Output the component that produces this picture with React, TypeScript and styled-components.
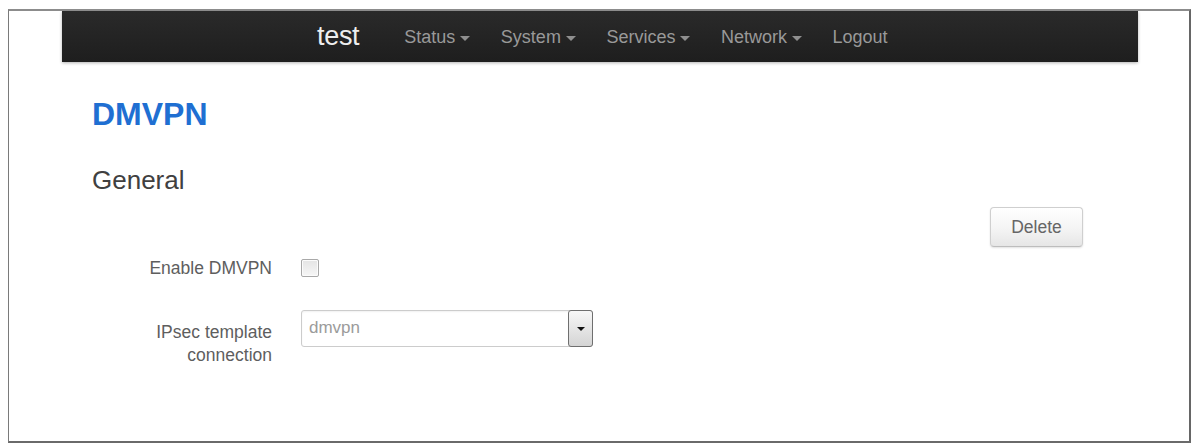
import React from "react";
import styled, { createGlobalStyle } from "styled-components";

const GlobalStyle = createGlobalStyle`
  html, body {
    margin: 0;
    padding: 0;
    background: #ffffff;
  }
  body {
    font-family: "Liberation Sans", Arial, Helvetica, sans-serif;
    overflow: hidden;
  }
  * { box-sizing: border-box; }
`;

const Frame = styled.div`
  width: 1183px;
  height: 434px;
  margin: 9px 0 0 8px;
  border-top: 2px solid #8c8c8c;
  border-left: 1px solid #7a7a7a;
  border-right: 2px solid #666666;
  border-bottom: 2px solid #6a6a6a;
  background: #ffffff;
  overflow: hidden;
`;

const Navbar = styled.nav`
  margin-left: 53px;
  width: 1076px;
  height: 51px;
  display: flex;
  align-items: center;
  padding-left: 255px;
  background: linear-gradient(to bottom, #2a2a2a 0%, #1e1e1e 100%);
  box-shadow: 0 1px 3px rgba(0, 0, 0, 0.3);
`;

const Brand = styled.span`
  font-size: 27px;
  color: #eeeeee;
  margin-right: 45px;
  letter-spacing: -0.3px;
`;

const NavList = styled.div`
  display: flex;
  align-items: center;
  gap: 30.5px;
`;

const NavItem = styled.span`
  display: flex;
  align-items: center;
  font-size: 18px;
  color: #999999;
  padding-top: 1px;
`;

const Caret = styled.span`
  display: inline-block;
  margin-left: 5px;
  margin-top: 2px;
  width: 0;
  height: 0;
  border-left: 5px solid transparent;
  border-right: 5px solid transparent;
  border-top: 5px solid #8f8f8f;
`;

const Main = styled.main`
  width: 1074px;
  padding: 34px 0 0 83px;
`;

const Title = styled.h2`
  margin: 0;
  font-size: 32px;
  line-height: 36px;
  font-weight: bold;
  color: #1f6fd2;
`;

const SectionTitle = styled.h3`
  margin: 33px 0 0 0;
  font-size: 26px;
  line-height: 30px;
  font-weight: normal;
  color: #404040;
`;

const Toolbar = styled.div`
  display: flex;
  justify-content: flex-end;
  margin-top: 12px;
`;

const Button = styled.button`
  width: 93px;
  height: 40px;
  font-family: inherit;
  font-size: 17.5px;
  color: #666666;
  background: linear-gradient(to bottom, #ffffff 0%, #f4f4f4 55%, #e6e6e6 100%);
  border: 1px solid #cfcfcf;
  border-bottom-color: #bdbdbd;
  border-radius: 4px;
  box-shadow: 0 1px 2px rgba(0, 0, 0, 0.12);
  padding: 0;
`;

const FormRow = styled.div<{ $top: number }>`
  display: grid;
  grid-template-columns: 180px 1fr;
  column-gap: 29px;
  align-items: start;
  margin-top: ${(p) => p.$top}px;
`;

const Label = styled.label<{ $pad: number }>`
  text-align: right;
  font-size: 17.5px;
  line-height: 23px;
  color: #5e5e5e;
  padding-top: ${(p) => p.$pad}px;
`;

const Checkbox = styled.span`
  display: block;
  width: 18px;
  height: 18px;
  margin-top: 1.5px;
  border: 1px solid #a8a8a8;
  border-radius: 2px;
  background: linear-gradient(to bottom, #e4e4e4 0%, #f6f6f6 100%);
  box-shadow: inset 0 0 0 1px #fbfbfb;
`;

const SelectBox = styled.div`
  display: flex;
  width: 292px;
  height: 37px;
  border: 1px solid #cccccc;
  border-radius: 3px;
  background: #ffffff;
  box-shadow: inset 0 1px 2px rgba(0, 0, 0, 0.06);
`;

const SelectValue = styled.span`
  flex: 1;
  padding: 7px 0 0 7px;
  font-size: 17px;
  color: #9b9b9b;
`;

const SelectButton = styled.span`
  width: 25px;
  margin: -1px -1px -1px 0;
  display: flex;
  align-items: center;
  justify-content: center;
  border: 1px solid #6f6f6f;
  border-radius: 3px;
  background: linear-gradient(to bottom, #f7f7f7 0%, #e2e2e2 60%, #d4d4d4 100%);
`;

const Arrow = styled.span`
  width: 0;
  height: 0;
  border-left: 4px solid transparent;
  border-right: 4px solid transparent;
  border-top: 4px solid #111111;
`;

const navItems = [
  { label: "Status", caret: true },
  { label: "System", caret: true },
  { label: "Services", caret: true },
  { label: "Network", caret: true },
  { label: "Logout", caret: false },
];

export default function App() {
  return (
    <>
      <GlobalStyle />
      <Frame>
        <Navbar>
          <Brand>test</Brand>
          <NavList>
            {navItems.map((item) => (
              <NavItem key={item.label}>
                {item.label}
                {item.caret && <Caret />}
              </NavItem>
            ))}
          </NavList>
        </Navbar>
        <Main>
          <Title>DMVPN</Title>
          <SectionTitle>General</SectionTitle>
          <Toolbar>
            <Button>Delete</Button>
          </Toolbar>
          <FormRow $top={10}>
            <Label $pad={0}>Enable DMVPN</Label>
            <Checkbox />
          </FormRow>
          <FormRow $top={30}>
            <Label $pad={11}>IPsec template connection</Label>
            <SelectBox>
              <SelectValue>dmvpn</SelectValue>
              <SelectButton>
                <Arrow />
              </SelectButton>
            </SelectBox>
          </FormRow>
        </Main>
      </Frame>
    </>
  );
}
